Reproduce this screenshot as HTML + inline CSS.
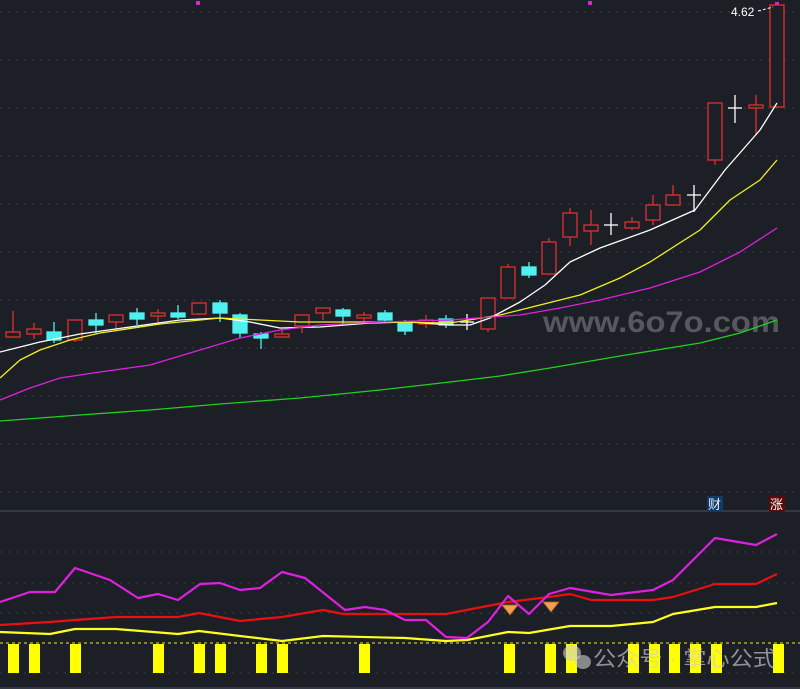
<!DOCTYPE html>
<html><head><meta charset="utf-8"><style>
html,body{margin:0;padding:0;background:#1c1f26;width:800px;height:689px;overflow:hidden}
svg{display:block}
text{font-family:"Liberation Sans","Noto Sans CJK SC",sans-serif}
</style></head><body>
<svg width="800" height="689" viewBox="0 0 800 689" xmlns="http://www.w3.org/2000/svg">
<rect width="800" height="689" fill="#1c1f26"/>
<g stroke="#3a3e48" stroke-width="1" stroke-dasharray="2,6">
<line x1="0" y1="12" x2="800" y2="12"/><line x1="0" y1="60" x2="800" y2="60"/><line x1="0" y1="108" x2="800" y2="108"/><line x1="0" y1="156" x2="800" y2="156"/><line x1="0" y1="204" x2="800" y2="204"/><line x1="0" y1="252" x2="800" y2="252"/><line x1="0" y1="300" x2="800" y2="300"/><line x1="0" y1="348" x2="800" y2="348"/><line x1="0" y1="396" x2="800" y2="396"/><line x1="0" y1="444" x2="800" y2="444"/><line x1="0" y1="492" x2="800" y2="492"/>
<line x1="0" y1="552" x2="800" y2="552"/><line x1="0" y1="583" x2="800" y2="583"/><line x1="0" y1="613" x2="800" y2="613"/><line x1="0" y1="673" x2="800" y2="673"/>
</g>
<line x1="0" y1="511" x2="800" y2="511" stroke="#3c414c" stroke-width="1.5"/>
<line x1="0" y1="688" x2="800" y2="688" stroke="#3c414c" stroke-width="1.5"/>
<g fill="#e020e0"><rect x="196" y="1" width="4" height="4"/><rect x="588" y="1" width="4" height="4"/><rect x="775" y="2" width="4" height="4"/></g>
<text x="543" y="332" font-size="30" fill="#56585d" font-weight="bold" textLength="237" lengthAdjust="spacingAndGlyphs">www.6o7o.com</text>
<!-- candles -->
<g stroke-width="1.3">
<g stroke="#e03030" fill="none">
<line x1="13" y1="311" x2="13" y2="338"/><rect x="6" y="332" width="14" height="5" fill="#1c1f26"/>
<line x1="34" y1="323" x2="34" y2="339"/><rect x="27" y="329" width="14" height="5" fill="#1c1f26"/>
<line x1="75" y1="320" x2="75" y2="342"/><rect x="68" y="320" width="14" height="20" fill="#1c1f26"/>
<line x1="116" y1="315" x2="116" y2="330"/><rect x="109" y="315" width="14" height="7" fill="#1c1f26"/>
<line x1="158" y1="309" x2="158" y2="323"/><rect x="151" y="313" width="14" height="3" fill="#1c1f26"/>
<line x1="199" y1="303" x2="199" y2="315"/><rect x="192" y="303" width="14" height="11" fill="#1c1f26"/>
<line x1="282" y1="328" x2="282" y2="338"/><rect x="275" y="334" width="14" height="3" fill="#1c1f26"/>
<line x1="302" y1="315" x2="302" y2="333"/><rect x="295" y="315" width="14" height="11" fill="#1c1f26"/>
<line x1="323" y1="308" x2="323" y2="320"/><rect x="316" y="308" width="14" height="5" fill="#1c1f26"/>
<line x1="364" y1="312" x2="364" y2="322"/><rect x="357" y="315" width="14" height="3" fill="#1c1f26"/>
<line x1="426" y1="315" x2="426" y2="328"/><rect x="419" y="320" width="14" height="4" fill="#1c1f26"/>
<line x1="488" y1="298" x2="488" y2="332"/><rect x="481" y="298" width="14" height="31" fill="#1c1f26"/>
<line x1="508" y1="264" x2="508" y2="298"/><rect x="501" y="267" width="14" height="31" fill="#1c1f26"/>
<line x1="549" y1="238" x2="549" y2="274"/><rect x="542" y="242" width="14" height="32" fill="#1c1f26"/>
<line x1="570" y1="208" x2="570" y2="246"/><rect x="563" y="213" width="14" height="24" fill="#1c1f26"/>
<line x1="591" y1="210" x2="591" y2="245"/><rect x="584" y="225" width="14" height="6" fill="#1c1f26"/>
<line x1="632" y1="217" x2="632" y2="230"/><rect x="625" y="222" width="14" height="6" fill="#1c1f26"/>
<line x1="653" y1="195" x2="653" y2="225"/><rect x="646" y="205" width="14" height="15" fill="#1c1f26"/>
<line x1="673" y1="185" x2="673" y2="205"/><rect x="666" y="195" width="14" height="10" fill="#1c1f26"/>
<line x1="715" y1="103" x2="715" y2="165"/><rect x="708" y="103" width="14" height="57" fill="#1c1f26"/>
<line x1="756" y1="95" x2="756" y2="135"/><rect x="749" y="105" width="14" height="3" fill="#1c1f26"/>
<rect x="770" y="5" width="14" height="102" fill="#1c1f26"/>
</g>
<g stroke="#50f0f0" fill="#50f0f0">
<line x1="54" y1="322" x2="54" y2="343"/><rect x="47" y="332" width="14" height="8"/>
<line x1="96" y1="313" x2="96" y2="333"/><rect x="89" y="320" width="14" height="5"/>
<line x1="137" y1="308" x2="137" y2="325"/><rect x="130" y="313" width="14" height="6"/>
<line x1="178" y1="305" x2="178" y2="319"/><rect x="171" y="313" width="14" height="4"/>
<line x1="220" y1="300" x2="220" y2="322"/><rect x="213" y="303" width="14" height="10"/>
<line x1="240" y1="313" x2="240" y2="338"/><rect x="233" y="315" width="14" height="18"/>
<line x1="261" y1="332" x2="261" y2="349"/><rect x="254" y="334" width="14" height="4"/>
<line x1="343" y1="308" x2="343" y2="324"/><rect x="336" y="310" width="14" height="6"/>
<line x1="385" y1="310" x2="385" y2="322"/><rect x="378" y="313" width="14" height="7"/>
<line x1="405" y1="320" x2="405" y2="335"/><rect x="398" y="323" width="14" height="8"/>
<line x1="446" y1="315" x2="446" y2="328"/><rect x="439" y="319" width="14" height="6"/>
<line x1="529" y1="262" x2="529" y2="278"/><rect x="522" y="267" width="14" height="8"/>
</g>
<g stroke="#ffffff">
<line x1="467" y1="314" x2="467" y2="330"/><line x1="460" y1="322" x2="474" y2="322"/>
<line x1="611" y1="213" x2="611" y2="235"/><line x1="604" y1="225" x2="618" y2="225"/>
<line x1="694" y1="185" x2="694" y2="212"/><line x1="687" y1="195" x2="701" y2="195"/>
<line x1="735" y1="95" x2="735" y2="123"/><line x1="728" y1="108" x2="742" y2="108"/>
</g>
</g>
<g fill="none" stroke-width="1.3" stroke-linejoin="round">
<polyline stroke="#ffffff" points="0,352 40,342 80,334 130,327 180,320 220,318 250,322 280,328 320,327 370,323 410,322 450,325 470,325 490,318 520,302 545,285 570,262 600,248 650,230 695,210 725,170 760,130 777,103"/>
<polyline stroke="#f0f020" points="0,378 20,360 40,350 70,340 100,333 160,324 220,318 260,320 300,322 380,322 450,323 500,315 540,305 580,295 620,278 650,262 700,230 730,200 760,180 777,160"/>
<polyline stroke="#e020e0" points="0,400 30,388 60,378 100,372 150,365 200,350 240,338 280,330 320,325 380,322 450,320 520,315 560,308 600,300 650,288 700,272 740,252 777,228"/>
<polyline stroke="#20d020" points="0,421 80,415 150,410 220,404 300,398 380,390 450,382 500,376 550,368 620,356 700,343 740,333 777,320"/>
</g>
<text x="731" y="16" font-size="12" fill="#ffffff">4.62</text>
<line x1="758" y1="11" x2="773" y2="7" stroke="#fff" stroke-dasharray="3,2"/>
<rect x="707" y="496" width="16" height="16" fill="#123a66"/>
<text x="708" y="509" font-size="13" fill="#e8f0ff">财</text>
<rect x="769" y="496" width="16" height="16" fill="#5a0a0a"/>
<text x="770" y="509" font-size="13" fill="#ffffff">涨</text>
<!-- lower panel -->
<line x1="0" y1="643" x2="800" y2="643" stroke="#f0f020" stroke-dasharray="3,3" stroke-width="1"/>
<g fill="#ffff00">
<rect x="8" y="644" width="11" height="29"/><rect x="29" y="644" width="11" height="29"/><rect x="70" y="644" width="11" height="29"/><rect x="153" y="644" width="11" height="29"/><rect x="194" y="644" width="11" height="29"/><rect x="215" y="644" width="11" height="29"/><rect x="256" y="644" width="11" height="29"/><rect x="277" y="644" width="11" height="29"/><rect x="359" y="644" width="11" height="29"/><rect x="504" y="644" width="11" height="29"/><rect x="545" y="644" width="11" height="29"/><rect x="566" y="644" width="11" height="29"/><rect x="628" y="644" width="11" height="29"/><rect x="649" y="644" width="11" height="29"/><rect x="669" y="644" width="11" height="29"/><rect x="690" y="644" width="11" height="29"/><rect x="711" y="644" width="11" height="29"/><rect x="773" y="644" width="11" height="29"/>
</g>
<g fill="none" stroke-width="2.2" stroke-linejoin="round">
<polyline stroke="#ffff20" points="0,632 50,634 75,629 116,629 178,634 199,631 240,636 282,641 323,636 405,638 446,641 467,640 508,632 529,633 570,626 611,626 653,622 673,614 715,607 756,607 777,603"/>
<polyline stroke="#e81010" points="0,625 50,622 75,620 116,617 178,617 199,613 240,621 282,617 323,610 343,614 446,614 508,602 549,597 570,594 591,600 653,600 673,597 715,584 756,584 777,574"/>
<polyline stroke="#e020e0" points="0,602 30,592 55,592 75,568 110,580 138,598 158,594 178,600 200,584 220,583 240,590 260,588 282,572 305,578 345,610 365,607 385,610 405,620 426,620 446,637 467,638 488,622 508,596 529,614 549,594 570,588 611,595 653,590 673,580 715,538 756,545 777,534"/>
</g>
<g fill="#f0a050" stroke="#b06020" stroke-width="0.8">
<path d="M502,605 h16 l-8,10 z"/><path d="M543,602 h16 l-8,10 z"/>
</g>
<g fill="#cfcfcf" fill-opacity="0.6">
<ellipse cx="572" cy="653" rx="9" ry="8"/><ellipse cx="583" cy="662" rx="8" ry="7"/>
</g>
<text x="593" y="666" font-size="21" fill="#d0d0d0" fill-opacity="0.65" textLength="183" lengthAdjust="spacingAndGlyphs">公众号 · 掌心公式</text>
</svg>
</body></html>
